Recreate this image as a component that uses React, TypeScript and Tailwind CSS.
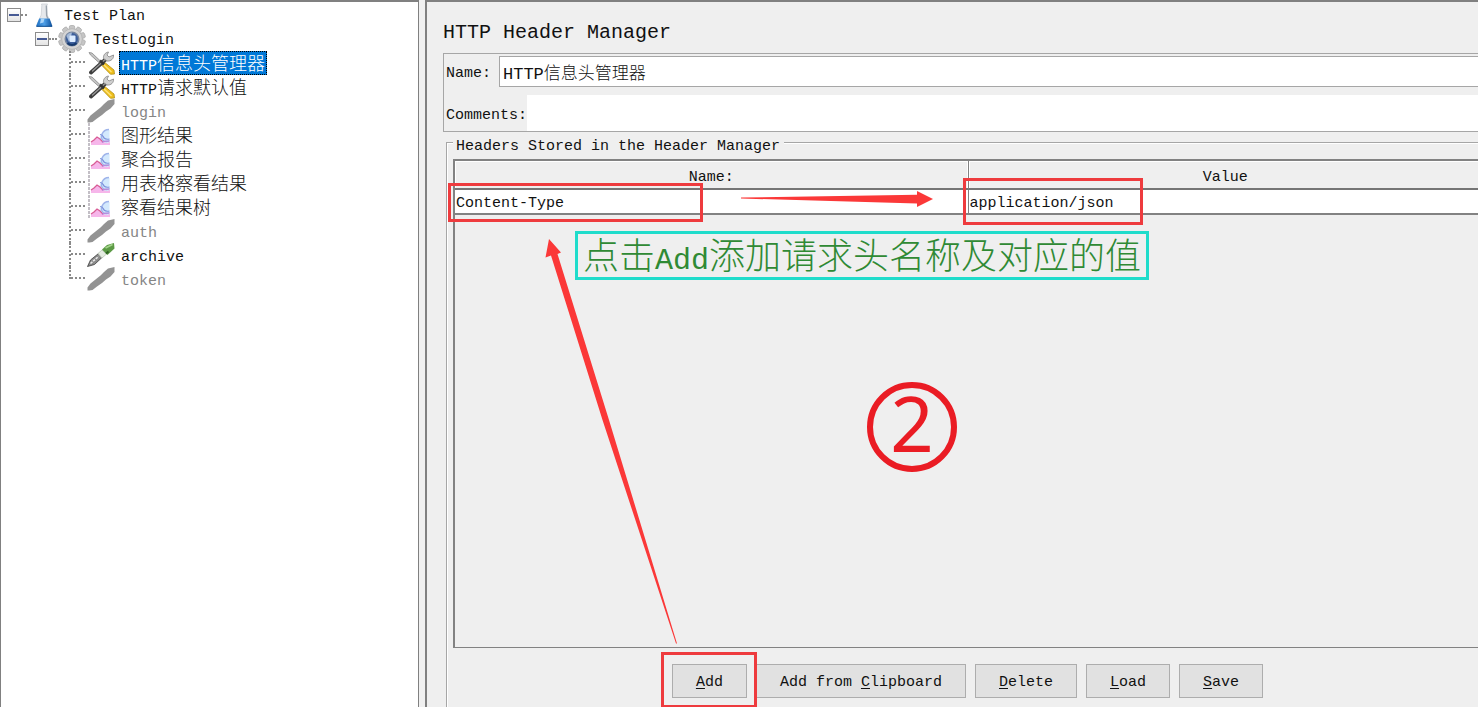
import React, { useState } from "react";

const MONO = "font-['Liberation_Mono','Noto_Sans_CJK_SC',monospace]";

/* Latin runs are set at five sixths of the CJK size, so that one ideograph takes two Latin cells. */
function Label({ text }: { text: string }) {
  const runs = text.match(/[\u0000-\u00ff]+|[^\u0000-\u00ff]+/g) ?? [];
  return (
    <>
      {runs.map((run, i) => (
        <span key={i} className={run.charCodeAt(0) > 255 ? "text-[1.2em] font-light" : ""}>
          {run}
        </span>
      ))}
    </>
  );
}

function FlaskIcon() {
  return (
    <svg className="h-6 w-5" viewBox="0 0 20 24" aria-hidden="true">
      <defs>
        <linearGradient id="flask-liquid" x1="0" x2="1">
          <stop offset="0" stopColor="#1c6fc4" />
          <stop offset=".5" stopColor="#4f9fe6" />
          <stop offset="1" stopColor="#0b4f9c" />
        </linearGradient>
      </defs>
      <path d="M6.500 1h6l-.6 1.500.4 9.500 4.500 10.500H1.500l4.700-10.500.6-9.500z" fill="#e6e8eb" stroke="#cdd1d6" strokeWidth=".8" />
      <path d="M11.300 2.500l.3 10 1.200 3" stroke="#9aa3ad" strokeWidth="1.300" fill="none" />
      <path d="M4.200 15.500h10.400l2.900 8H1z" fill="url(#flask-liquid)" />
      <path d="M6 15.500h3.500l-1 4-3.500 1z" fill="#a9d4f8" />
      <path d="M1.500 23.300h15.500" stroke="#0d4a8c" strokeWidth="1" />
    </svg>
  );
}

function GearIcon() {
  const teeth = [0, 36, 72, 108, 144, 180, 216, 252, 288, 324];
  return (
    <svg className="h-7 w-[30px] shrink-0" viewBox="0 0 30 28" aria-hidden="true">
      {teeth.map((a) => (
        <rect key={a} x="12.300" y=".5" width="5.400" height="6" rx="1.500" fill="#c6c6c6" stroke="#a8a8a8" strokeWidth=".7" transform={`rotate(${a} 15 14)`} />
      ))}
      <circle cx="15" cy="14" r="10.300" fill="#d4d4d4" stroke="#b4b4b4" strokeWidth=".8" />
      <circle cx="15" cy="14" r="7.500" fill="#75859f" />
      <circle cx="15" cy="14" r="6" fill="#3c5f9c" />
      <path d="M9.500 11a6 6 0 0 1 5.500-3.500l-1 4-2 5.500z" fill="#a5bbd9" />
      <rect x="12.500" y="10.500" width="6" height="6.500" rx="1" fill="#dcecff" />
      <path d="M10.500 18a6 6 0 0 0 9 0" stroke="#173a6e" strokeWidth="2" fill="none" />
    </svg>
  );
}

function ToolsIcon() {
  return (
    <svg className="h-6 w-[29px]" viewBox="1 0 29 24" aria-hidden="true">
      <path d="M3 1.500l3 .5 10 9.500-1.500 1.500L4.500 4z" fill="#c4c4c4" stroke="#8a8a8a" strokeWidth=".8" />
      <path d="M15 11.500l2-1.500 11 9 .5 4-4 .3-9.500-9.800z" fill="#efbf1c" stroke="#b08f1c" strokeWidth=".8" />
      <path d="M17 13l8.500 8" stroke="#ffe47a" strokeWidth="1.300" />
      <path d="M5 21.500L19.500 8.500" stroke="#3e3e3e" strokeWidth="3.800" strokeLinecap="round" />
      <path d="M6.500 20L18.500 9" stroke="#9a9a9a" strokeWidth="1.200" strokeLinecap="round" />
      <path d="M14 9.500l4 4" stroke="#333" strokeWidth="2.500" />
      <path d="M17.500 7.500c-.5-3 1.500-6 5-6.500l-1.500 3 2 2 4.500-2c.5 3.500-2.500 6.500-6.500 6z" fill="#cfcfcf" stroke="#8d8d8d" strokeWidth=".9" />
    </svg>
  );
}

function PenIcon({ color }: { color: boolean }) {
  return (
    <svg className="h-6 w-[29px]" viewBox="1 0 29 24" aria-hidden="true">
      {color ? (
        <>
          <path d="M1.500 23.500l3-6.500 8-6.500 4 3.500-8 7.500z" fill="#8a8a8a" stroke="#3d3d3d" strokeWidth=".8" />
          <path d="M4.500 20.500l8-7" stroke="#e8e8e8" strokeWidth="1.600" strokeDasharray="2.500 1" />
          <path d="M12 10.500l4-3.500 4.500 4-4.500 4z" fill="#e5ece2" stroke="#b4bfb0" strokeWidth=".7" />
          <path d="M16 6.500l5-4.500 7-2 .5 5.500-7 6.500z" fill="#5c9a45" />
          <path d="M19.500 5l7-3.500" stroke="#a5d48d" strokeWidth="1.800" />
          <path d="M20 10.500l2.500-2" stroke="#2f6123" strokeWidth="2" />
        </>
      ) : (
        <path d="M1.500 23.500v-3l3-4 5-4 5-4L18 5l4-3.500 6.500-1.500v5l-4 4.500-4.500 3-4 3.500-5 3.500-4.500 3.500-3 .500z" fill="#939393" />
      )}
    </svg>
  );
}

function ChartIcon() {
  return (
    <svg className="h-6 w-[29px]" viewBox="2 0 29 24" aria-hidden="true">
      <path d="M4 0v24" stroke="#b0abb4" strokeWidth="1.500" strokeDasharray="3 1" />
      <path d="M24.500 7v13h-8l-2-5 2-5 4-3z" fill="#d3e9fd" />
      <path d="M6 22v-3l3-2 3-3 3 2 3 3 4 1 3-1v3z" fill="#f6b6ea" />
      <path d="M6 19l3-2 3-3 3 2 3 3" stroke="#d95c95" strokeWidth="1.300" fill="none" />
      <path d="M24 6.500c-4 0-6 2-7 5-1 3-.5 5 2 6.500 2 .8 4 .5 5.500-.500" stroke="#9fb4ea" strokeWidth="1.300" fill="none" />
      <path d="M15 11.500c3 0 3 2 4 3.500 1.500 1.500 3 1.500 5.500 1" stroke="#7d92dc" strokeWidth="1.200" fill="none" />
      <path d="M17 19.500c3-2 5-1 7.500-1.500" stroke="#b989dc" strokeWidth="1.200" fill="none" />
    </svg>
  );
}

type Kind = "tools" | "pen" | "pen-off" | "chart";
const nodes: { name: string; kind: Kind }[] = [
  { name: "HTTP信息头管理器", kind: "tools" },
  { name: "HTTP请求默认值", kind: "tools" },
  { name: "login", kind: "pen-off" },
  { name: "图形结果", kind: "chart" },
  { name: "聚合报告", kind: "chart" },
  { name: "用表格察看结果", kind: "chart" },
  { name: "察看结果树", kind: "chart" },
  { name: "auth", kind: "pen-off" },
  { name: "archive", kind: "pen" },
  { name: "token", kind: "pen-off" },
];

function NodeIcon({ kind }: { kind: Kind }) {
  if (kind === "tools") return <ToolsIcon />;
  if (kind === "chart") return <ChartIcon />;
  return <PenIcon color={kind === "pen"} />;
}

function Expander({ label }: { label: string }) {
  return (
    <button
      type="button"
      aria-label={label}
      className="flex size-[14px] shrink-0 items-center justify-center border border-[#8c8c8c] bg-gradient-to-b from-white to-[#e4e4e4]"
    >
      <span className="h-[2px] w-[10px] bg-[#465a94]" />
    </button>
  );
}

function TestTree() {
  const [selected, setSelected] = useState(0);
  return (
    <nav aria-label="Test plan" className="w-[419px] shrink-0 border-t-2 border-r border-l border-[#808080] bg-white pt-px">
      <ul>
        <li>
          <div className="flex h-6 items-center pl-[6px]">
            <Expander label="Collapse Test Plan" />
            <span className="mr-2 w-[6px] border-t-2 border-dotted border-[#8a8a8a]" />
            <FlaskIcon />
            <span className="pt-[5px] pl-[9px]">Test Plan</span>
          </div>
          <ul>
            <li>
              <div className="flex h-6 items-center pl-[34px]">
                <Expander label="Collapse TestLogin" />
                <span className="w-2 border-t-2 border-dotted border-[#8a8a8a]" />
                <GearIcon />
                <span className="pt-[5px] pl-[6px]">TestLogin</span>
              </div>
              <ul>
                {nodes.map((n, i) => (
                  <li key={n.name} className="flex h-6 pl-[68px]">
                    <span className={`${i === nodes.length - 1 ? "h-3" : "h-6"} border-l-2 border-dotted border-[#8a8a8a]`} />
                    <span className="mr-[2px] h-3 w-[14px] border-b-2 border-dotted border-[#8a8a8a]" />
                    <NodeIcon kind={n.kind} />
                    <button
                      type="button"
                      onClick={() => setSelected(i)}
                      className={`ml-[3px] h-6 border px-px pt-[5px] leading-[17px] whitespace-nowrap ${
                        i === selected
                          ? "border-dotted border-[#ff8728] bg-[#0078d7] text-white outline-1 -outline-offset-1 outline-dotted outline-black"
                          : "border-transparent"
                      } ${n.kind === "pen-off" ? "text-[#858585]" : ""}`}
                    >
                      <Label text={n.name} />
                    </button>
                  </li>
                ))}
              </ul>
            </li>
          </ul>
        </li>
      </ul>
    </nav>
  );
}

function PushButton({ before = "", letter, after }: { before?: string; letter: string; after: string }) {
  return (
    <button type="button" className="h-[34px] border border-[#adadad] bg-[#e1e1e1] px-[23px] pt-[5px] whitespace-pre">
      {before}
      <span className="underline underline-offset-2">{letter}</span>
      {after}
    </button>
  );
}

function Annotations() {
  return (
    <div className="pointer-events-none absolute inset-0 overflow-hidden">
      <svg className="absolute inset-0 h-full w-full" aria-hidden="true">
        <path d="M741 197.500L917 194.700V191l16 8-16 8v-3.500L741 198.500z" fill="#fb3838" />
        <path d="M549 239l12 13.500-3.500 1.500L609 420l68 223.500h-1L602.500 420 551 255.500l-5.500 2z" fill="#fb3838" />
      </svg>
      <div className="absolute top-[183px] left-[448px] h-[39px] w-[255px] border-3 border-[#ee3b3e]" />
      <div className="absolute top-[178px] left-[963px] h-[47px] w-[180px] border-3 border-[#ee3b3e]" />
      <div className="absolute top-[652px] left-[661px] h-[56px] w-[96px] border-3 border-[#ee3b3e]" />
      <div className="absolute top-[231px] left-[575px] flex h-[49px] w-[574px] items-center justify-center border-3 border-[#1fdccb] pt-2 text-[30px] leading-none whitespace-nowrap text-[#2f8a34]">
        <p>
          <Label text="点击Add添加请求头名称及对应的值" />
        </p>
      </div>
      <div className="absolute top-[382px] left-[867px] flex size-[90px] items-center justify-center rounded-full border-6 border-[#ea1c24] pb-2 font-['Noto_Sans',sans-serif] text-[76px] leading-none text-[#ea1c24]">
        2
      </div>
    </div>
  );
}

export default function App() {
  return (
    <div className={`relative flex h-screen min-h-[480px] overflow-hidden bg-[#f0f0f0] text-[15px] text-[#111] ${MONO}`}>
      <TestTree />
      <main className="-mr-1 ml-[6px] flex min-w-0 flex-1 flex-col border-t-2 border-l-2 border-[#808080] bg-[#efefef] pl-4">
        <h1 className="pt-[19px] pb-2 text-[20px] leading-6">HTTP Header Manager</h1>
        <div className="flex h-[79px] shrink-0 flex-col border border-[#a6a6a6] pt-[2px] pl-[2px]">
          <div className="flex h-[31px] items-center">
            <label htmlFor="name" className="w-[53px] pt-[6px]">Name:</label>
            <input
              id="name"
              defaultValue="HTTP信息头管理器"
              className="h-full min-w-0 flex-1 border border-[#a6a6a6] bg-white px-[3px] text-[17px] font-light outline-none"
            />
          </div>
          <div className="mt-2 flex h-9 items-center">
            <label htmlFor="comments" className="w-[81px] pt-[6px]">Comments:</label>
            <input id="comments" className="h-full min-w-0 flex-1 bg-white px-[3px] text-[17px] outline-none" />
          </div>
        </div>

        <section aria-labelledby="headers" className="mt-[10px] ml-[3px] flex min-h-0 flex-1 flex-col border-t border-l border-[#a6a6a6] pb-[9px] pl-[6px] shadow-[inset_1px_1px_0_#fff]">
          <h2 id="headers" className="-mt-2 h-6 self-start bg-[#efefef] pr-1 pl-[3px] leading-6">
            Headers Stored in the Header Manager
          </h2>
          <div className="min-h-0 flex-1 border-t-2 border-b border-l-2 border-[#828282]">
            <table className="w-full table-fixed border-separate border-spacing-0">
              <thead>
                <tr className="h-[29px]">
                  <th className="border-r border-b-2 border-r-[#828282] border-b-[#757575] p-0 pt-[6px] leading-5 font-normal shadow-[inset_1px_1px_0_#fff,inset_-1px_0_0_#fff]">Name:</th>
                  <th className="border-b-2 border-[#757575] p-0 pt-[6px] leading-5 font-normal shadow-[inset_1px_1px_0_#fff]">Value</th>
                </tr>
              </thead>
              <tbody>
                <tr className="h-[25px] bg-white">
                  <td className="border-r border-b-2 border-[#828282] py-0 pt-[5px] pl-px leading-[18px]">Content-Type</td>
                  <td className="border-b-2 border-[#828282] py-0 pt-[5px] pl-px leading-[18px]">application/json</td>
                </tr>
              </tbody>
            </table>
          </div>
          <div className="mt-4 flex shrink-0 justify-center gap-[9px]">
            <PushButton letter="A" after="dd" />
            <PushButton before="Add from " letter="C" after="lipboard" />
            <PushButton letter="D" after="elete" />
            <PushButton letter="L" after="oad" />
            <PushButton letter="S" after="ave" />
          </div>
        </section>
      </main>
      <Annotations />
    </div>
  );
}
